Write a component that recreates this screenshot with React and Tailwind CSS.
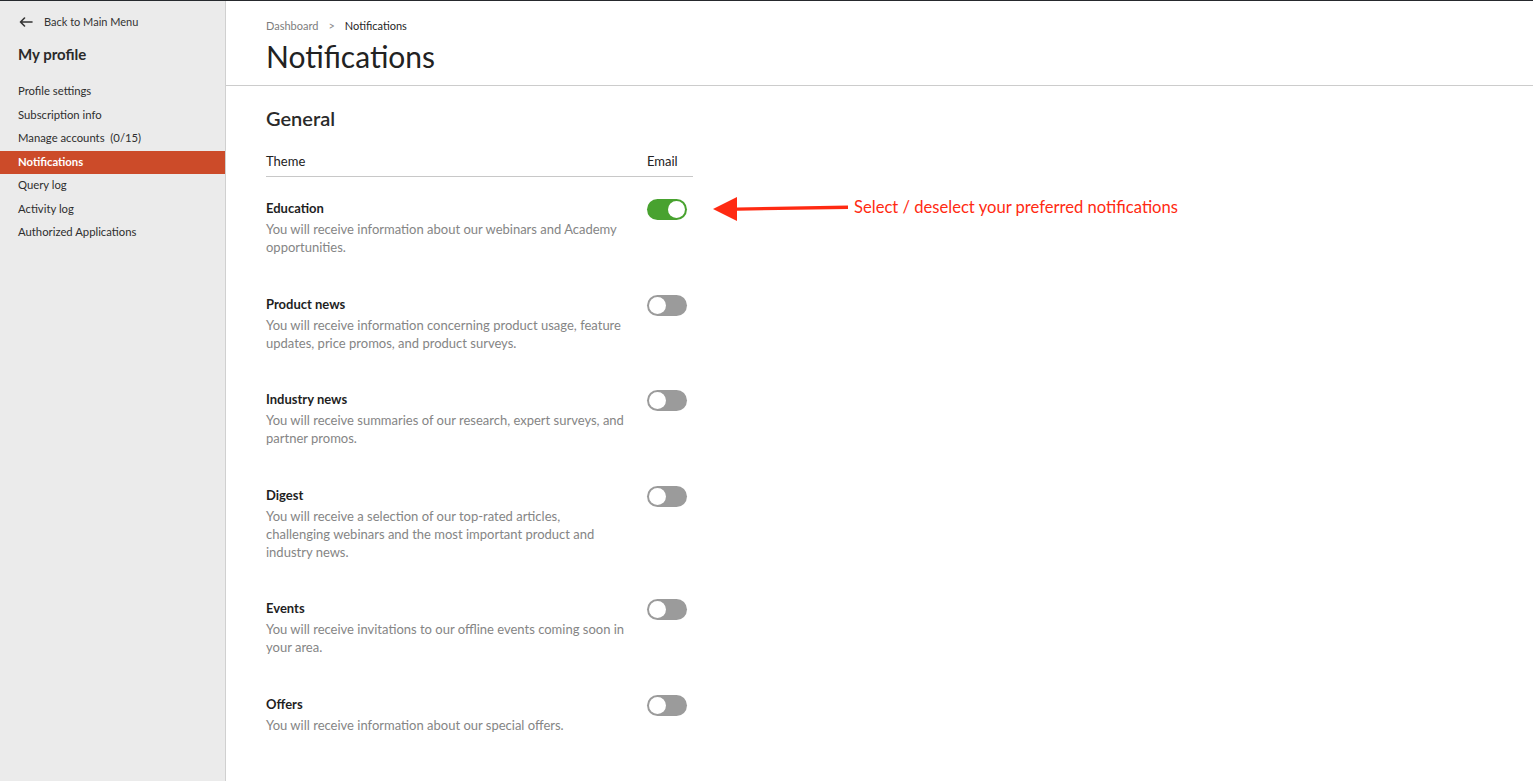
import React, { useState } from 'react';

const menu = [
  'Profile settings',
  'Subscription info',
  'Manage accounts  (0/15)',
  'Notifications',
  'Query log',
  'Activity log',
  'Authorized Applications',
];

const themes = [
  { title: 'Education', desc: 'You will receive information about our webinars and Academy opportunities.', on: true },
  { title: 'Product news', desc: 'You will receive information concerning product usage, feature updates, price promos, and product surveys.' },
  { title: 'Industry news', desc: 'You will receive summaries of our research, expert surveys, and partner promos.' },
  { title: 'Digest', desc: 'You will receive a selection of our top-rated articles, challenging webinars and the most important product and industry news.' },
  { title: 'Events', desc: 'You will receive invitations to our offline events coming soon in your area.' },
  { title: 'Offers', desc: 'You will receive information about our special offers.' },
];

const Toggle = ({ on, onClick }) => (
  <button
    onClick={onClick}
    className={`w-10 h-[21px] rounded-full p-[2px] flex items-center ${on ? 'bg-[#48a22f] justify-end' : 'bg-[#9b9b9b] justify-start'}`}
  >
    <span className="block w-[17px] h-[17px] rounded-full bg-white" />
  </button>
);

export default function App() {
  const [state, setState] = useState(themes.map((t) => !!t.on));

  return (
    <div className="h-screen flex border-t border-[#26292d] font-['Lato',sans-serif] text-[#222]">
      <aside className="w-[226px] shrink-0 bg-[#ebebeb] border-r border-[#d0d0d0]">
        <div className="flex items-center pl-[19px] pt-[13px] h-[29px] text-[11px] text-[#333]">
          <svg width="14" height="10" viewBox="0 0 14 10" fill="none" stroke="#333" strokeWidth="1.6" strokeLinecap="round" strokeLinejoin="round">
            <path d="M13 5H1.5M5.5 1L1.5 5l4 4" />
          </svg>
          <span className="ml-[11px]">Back to Main Menu</span>
        </div>
        <h2 className="pl-[18px] mt-[14px] text-[15px] font-bold leading-[20px] text-[#2a2a2a]">My profile</h2>
        <ul className="mt-[16px] text-[11.3px]">
          {menu.map((m) => (
            <li
              key={m}
              className={`h-[23.5px] flex items-center pl-[18px] whitespace-pre ${m === 'Notifications' ? 'bg-[#cc4b29] text-white font-bold' : 'text-[#2e2e2e]'}`}
            >
              {m}
            </li>
          ))}
        </ul>
      </aside>

      <main className="flex-1 bg-white">
        <header className="h-[85px] border-b border-[#cccccc] pl-10 pt-[17px]">
          <div className="flex items-center text-[11px] leading-[16px]">
            <span className="text-[#7d7d7d]">Dashboard</span>
            <span className="mx-[10px] text-[#8a8a8a] text-[11px]">&gt;</span>
            <span className="text-[#262626]">Notifications</span>
          </div>
          <h1 className="mt-[2px] text-[30px] leading-[40px] text-[#222]">Notifications</h1>
        </header>

        <section className="pl-10 pt-[19px]">
          <h2 className="text-[20px] leading-[26px] font-semibold text-[#2a2a2a]">General</h2>
          <div className="w-[427px] mt-[19px]">
            <div className="flex items-center h-[24px] border-b border-[#c8c8c8] text-[13px] pb-[2px] box-content">
              <span className="w-[381px]">Theme</span>
              <span>Email</span>
            </div>
            <div className="pt-[22px]">
              {themes.map((t, i) => (
                <div key={t.title} className="relative flex items-start pb-[38.5px]">
                  <div className="w-[381px]">
                    <div className="text-[13px] font-bold leading-[18px] mb-[3px] text-[#1f1f1f]">{t.title}</div>
                    <p className="w-[360px] text-[13px] leading-[18px] text-[#858585]">{t.desc}</p>
                  </div>
                  <Toggle
                    on={state[i]}
                    onClick={() => setState((s) => s.map((v, j) => (j === i ? !v : v)))}
                  />
                  {i === 0 && (
                    <div className="absolute left-[447px] top-[-4px] flex items-center">
                      <svg width="138" height="28" viewBox="0 0 138 28">
                        <path d="M24 12.5L135 10.5v3.4L24 15.8z" fill="#ff2a12" />
                        <path d="M0 14L24 2v24z" fill="#ff2a12" />
                      </svg>
                      <span className="ml-[3px] -mt-[4px] text-[16.6px] text-[#ff2a12] whitespace-nowrap">
                        Select / deselect your preferred notifications
                      </span>
                    </div>
                  )}
                </div>
              ))}
            </div>
          </div>
        </section>
      </main>
    </div>
  );
}
